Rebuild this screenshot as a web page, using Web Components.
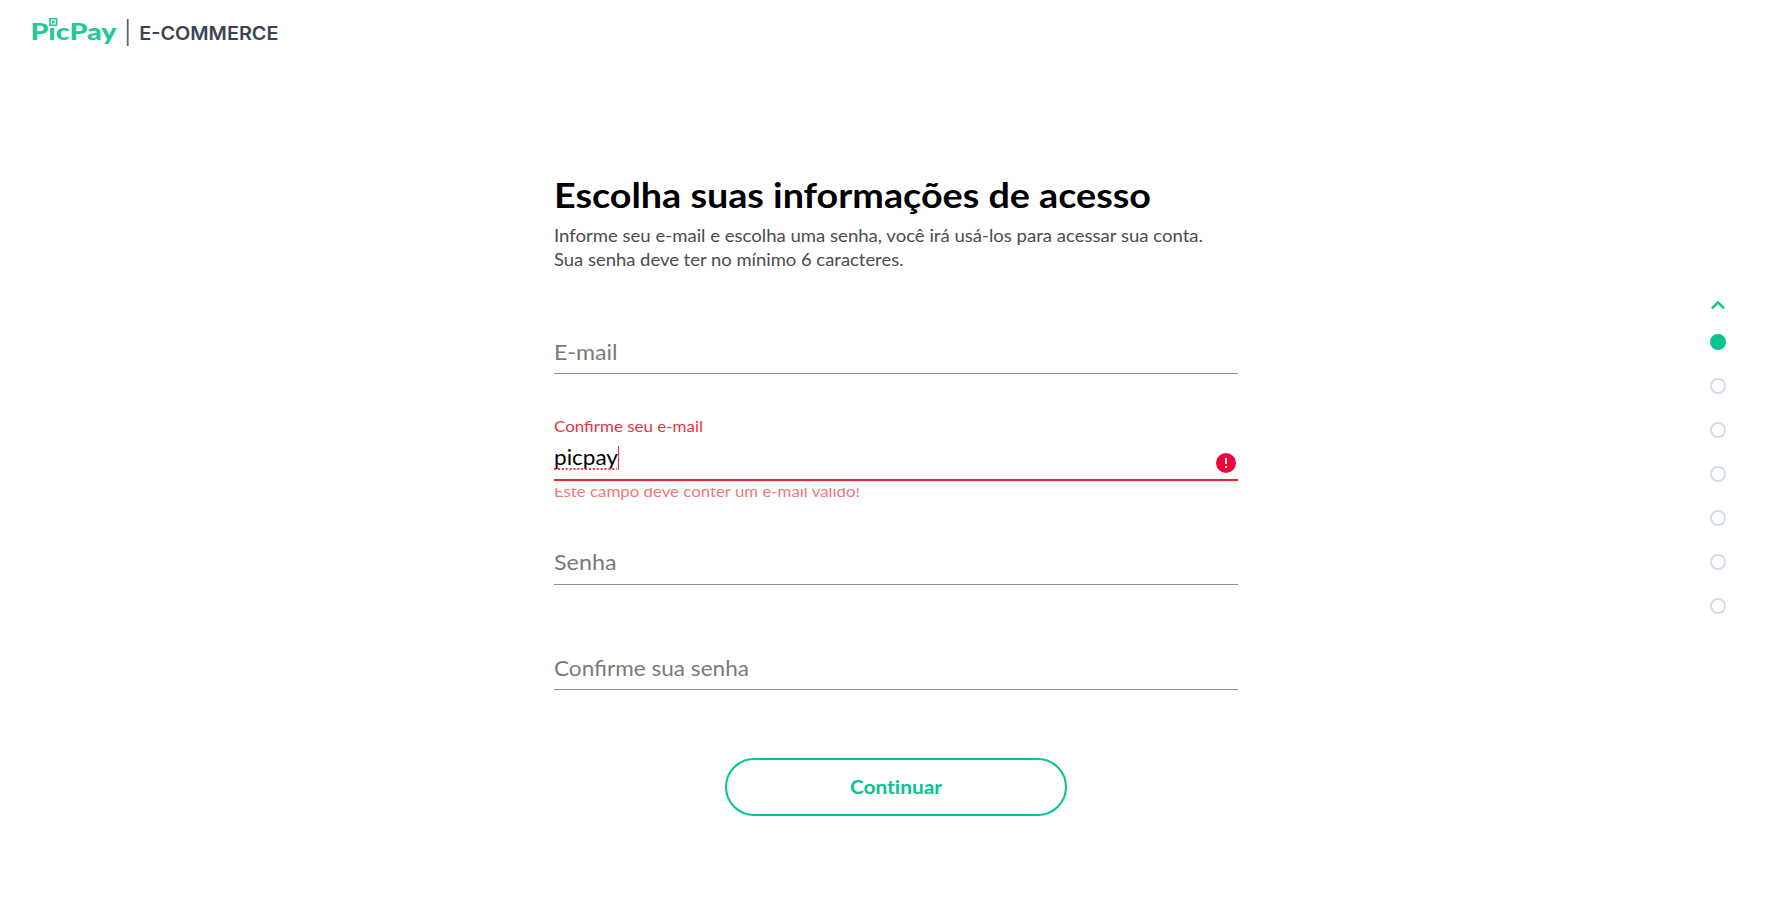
<!DOCTYPE html>
<html lang="pt-BR">
<head>
<meta charset="utf-8">
<title>PicPay E-commerce</title>
<style>
html,body{margin:0;height:100%;background:#fff;font-family:Lato,"Noto Sans",sans-serif;overflow:hidden}
</style>
</head>
<body>
<signup-page></signup-page>
<script>
const define = (name, html, setup) => customElements.define(name, class extends HTMLElement {
  connectedCallback() {
    if (this.shadowRoot) return;
    const t = document.createElement('template');
    t.innerHTML = html;
    this.attachShadow({ mode: 'open' }).append(t.content.cloneNode(true));
    if (setup) setup(this, this.shadowRoot);
  }
});

// A single line of text whose glyphs are widened to reach the given measure.
define('fitted-text', `<style>:host{display:block;white-space:nowrap;text-align:left}span{display:inline-block;transform-origin:0 50%}</style><span><slot></slot></span>`, (el, root) => {
  const span = root.querySelector('span');
  const measure = Number(el.getAttribute('measure'));
  const natural = span.getBoundingClientRect().width;
  el.style.width = measure + 'px';
  span.style.transform = `scaleX(${(measure / natural).toFixed(4)})`;
});

define('brand-logo', `<style>:host{display:block;width:290px;height:60px}svg{display:block}</style>
<svg width="290" height="60" viewBox="0 0 290 60">
  <text x="30.4" y="39.9" font-family="Lato,sans-serif" font-weight="900" font-size="22.8" fill="#21c997" textLength="86" lengthAdjust="spacingAndGlyphs">PicPay</text>
  <rect x="48" y="17" width="10.4" height="10.2" fill="#fff"/>
  <rect x="50" y="18.7" width="6.6" height="6.6" fill="none" stroke="#21c997" stroke-width="1.6"/>
  <rect x="51.9" y="20.6" width="2.8" height="2.8" fill="#21c997"/>
  <rect x="126.8" y="19" width="1.8" height="27" fill="#5c6472"/>
  <text x="139.2" y="39.9" font-family="Inter,sans-serif" font-weight="600" font-size="18.4" fill="#3b4454" textLength="139.3" lengthAdjust="spacingAndGlyphs">E-COMMERCE</text>
</svg>`);

define('text-field', `<style>
:host{display:block;width:684px}
.label{height:20px;line-height:20px;font-size:15.5px;color:#e5343d;margin-bottom:7px}
.row{display:flex;align-items:flex-start;height:28px;line-height:28px;font-size:21.5px;color:#7a7a7a;padding:0 0 7px;border-bottom:1px solid #8c8c8c}
:host([tall]) .row{padding-bottom:8px}
:host([invalid]) .row{color:#000;padding-bottom:8px;border-bottom:2px solid #e62a33}
.caret{width:1px;height:24px;margin-top:3px;background:#e62a33}
.value{position:relative}
:host([invalid]) .value::after{content:"";position:absolute;left:0;right:1px;top:24.5px;height:2px;background:radial-gradient(circle at 1px 1px,#f0303a 1px,transparent 1.4px) 0 0/3.9px 2px repeat-x}
svg{margin:10px 2px 0 auto;display:block}
.help{height:14px;margin-top:7px;overflow:hidden;font-size:15.5px;color:#f0787e}
.help slot{display:block;line-height:20px;margin-top:-7px}
:host(:not([invalid])) :is(.label,.help,.caret,svg){display:none}
</style>
<div class="label"><slot name="label"></slot></div>
<div class="row"><div class="value"><slot></slot></div><i class="caret"></i>
<svg width="20" height="20" viewBox="0 0 20 20"><circle cx="10" cy="10" r="10" fill="#f2053c"/><path d="M9 5h2v6H9zM9 13h2v2H9z" fill="#fff"/></svg></div>
<div class="help"><slot name="help"></slot></div>`);

define('pill-button', `<style>
:host{display:block}
button{display:flex;align-items:center;justify-content:center;box-sizing:border-box;width:342px;height:58px;padding:0 0 1px;border:2px solid #07c491;border-radius:29px;background:#fff;color:#07c491;font:700 19.5px/24px Lato,sans-serif;font-variant-ligatures:none}
</style><button type="button"><slot></slot></button>`);

define('step-dots', `<style>
:host{display:flex;flex-direction:column;align-items:center;width:16px}
svg{display:block;margin-bottom:24px}
.dots{display:flex;flex-direction:column;gap:28px}
i{box-sizing:border-box;width:16px;height:16px;border-radius:50%;border:2px solid #d3dcec}
i:first-child{background:#07c491;border-color:#07c491}
</style>
<svg width="16" height="10" viewBox="0 0 16 10"><path d="M1.9 8.4 8 2.4l6.1 6" fill="none" stroke="#07c491" stroke-width="2.4"/></svg>
<div class="dots"><i></i><i></i><i></i><i></i><i></i><i></i><i></i></div>`);

define('signup-page', `<style>
:host{display:grid;grid-template-columns:554px 684px 1fr;grid-template-rows:60px 1fr;height:919px}
brand-logo{grid-column:1/-1}
main{grid-column:2;padding-top:110px}
h1{margin:0;font-size:35px;line-height:48px;font-weight:700;color:#000}
.intro{margin-top:6px;font-size:17.5px;line-height:24px;color:#4c4c4c}
pill-button,.f1,.f2,.f3,.f4{font-variant-ligatures:normal}
.f1{margin-top:66px}.f2{margin-top:42px}.f3{margin-top:46px}.f4{margin-top:69px}
pill-button{width:342px;margin:68px auto 0;font-variant-ligatures:none}
step-dots{grid-column:3;justify-self:end;margin:240px 66px 0 0}
</style>
<brand-logo></brand-logo>
<main>
  <h1><fitted-text measure="597">Escolha suas informações de acesso</fitted-text></h1>
  <div class="intro">
    <fitted-text measure="649">Informe seu e-mail e escolha uma senha, você irá usá-los para acessar sua conta.</fitted-text>
    <fitted-text measure="349.5">Sua senha deve ter no mínimo 6 caracteres.</fitted-text>
  </div>
  <text-field class="f1"><fitted-text measure="63.5">E-mail</fitted-text></text-field>
  <text-field class="f2" invalid>
    <fitted-text slot="label" measure="149">Confirme seu e-mail</fitted-text><fitted-text measure="64">picpay</fitted-text><fitted-text slot="help" measure="306">Este campo deve conter um e-mail válido!</fitted-text>
  </text-field>
  <text-field class="f3" tall><fitted-text measure="62.5">Senha</fitted-text></text-field>
  <text-field class="f4"><fitted-text measure="195">Confirme sua senha</fitted-text></text-field>
  <pill-button><fitted-text measure="92">Continuar</fitted-text></pill-button>
</main>
<step-dots></step-dots>`);
</script>
</body>
</html>
